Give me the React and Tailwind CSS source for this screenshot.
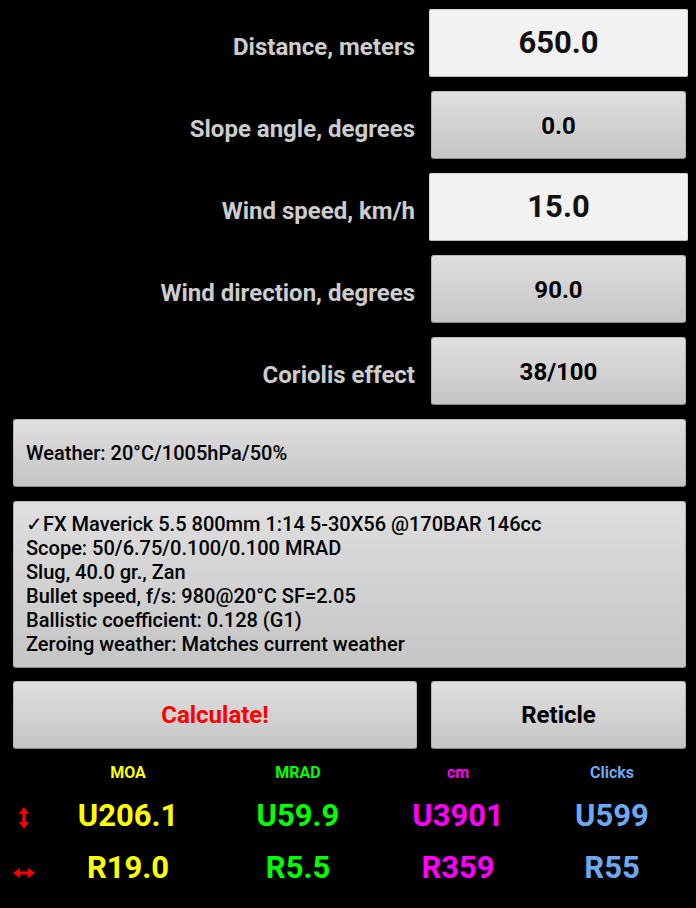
import React from "react";

const btn =
  "bg-linear-to-b from-[#dfdfdf] to-[#c5c5c5] rounded-[3px] border border-[#b4b4b4] border-b-[#8a8a8a]";

function Label({ children }) {
  return (
    <div className="flex-1 text-right pr-[14px] pt-[8px] text-[24px] font-bold text-[#cccccc] whitespace-nowrap">
      {children}
    </div>
  );
}

function InputRow({ label, value }) {
  return (
    <div className="flex items-center h-[82px]">
      <Label>{label}</Label>
      <div className="w-[259px] mr-[8px] h-[68px] bg-[#f2f2f2] border border-[#d4d4d4] border-b-[#b8b8b8] rounded-[2px] flex items-center justify-center text-[31px] font-bold text-[#111]">
        {value}
      </div>
    </div>
  );
}

function ButtonRow({ label, value }) {
  return (
    <div className="flex items-center h-[82px]">
      <Label>{label}</Label>
      <div className="w-[259px] mr-[8px] px-[2px]">
        <div className={`${btn} h-[68px] flex items-center justify-center pt-[1px] text-[24px] font-bold text-black`}>{value}</div>
      </div>
    </div>
  );
}

function VArrow() {
  return (
    <svg width="10" height="22" viewBox="0 0 10 22">
      <path d="M5 0 L10 7 L6.6 7 L6.6 15 L10 15 L5 22 L0 15 L3.4 15 L3.4 7 L0 7 Z" fill="#ff0000" />
    </svg>
  );
}

function HArrow() {
  return (
    <svg width="22" height="10" viewBox="0 0 22 10">
      <path d="M0 5 L7 0 L7 3.4 L15 3.4 L15 0 L22 5 L15 10 L15 6.6 L7 6.6 L7 10 Z" fill="#ff0000" />
    </svg>
  );
}

export default function App() {
  const profile = [
    "✓FX Maverick 5.5 800mm 1:14 5-30X56 @170BAR 146cc",
    "Scope: 50/6.75/0.100/0.100 MRAD",
    "Slug, 40.0 gr., Zan",
    "Bullet speed, f/s: 980@20°C SF=2.05",
    "Ballistic coefficient: 0.128 (G1)",
    "Zeroing weather: Matches current weather",
  ];
  const cols = "grid grid-cols-[48px_160px_180px_140px_168px] items-center";
  return (
    <div className="w-[696px] h-[908px] bg-black font-['Roboto',sans-serif] pt-[2px] overflow-hidden">
      <InputRow label="Distance, meters" value="650.0" />
      <ButtonRow label="Slope angle, degrees" value="0.0" />
      <InputRow label="Wind speed, km/h" value="15.0" />
      <ButtonRow label="Wind direction, degrees" value="90.0" />
      <ButtonRow label="Coriolis effect" value="38/100" />
      <div className="h-[82px] flex items-center pl-[13px] pr-[10px]">
        <div className={`${btn} w-full h-[68px] flex items-center pl-[12px] text-[20px] font-medium text-black`}>
          Weather: 20°C/1005hPa/50%
        </div>
      </div>
      <div className="h-[180px] flex items-center pl-[13px] pr-[10px]">
        <div className={`${btn} w-full h-[167px] flex flex-col justify-center pl-[12px] text-[20px] leading-[24px] font-medium text-black`}>
          {profile.map((l) => (
            <div key={l} className="whitespace-nowrap">{l}</div>
          ))}
        </div>
      </div>
      <div className="h-[82px] flex items-center pl-[13px] pr-[10px] gap-[14px]">
        <div className={`${btn} w-[404px] h-[68px] flex items-center justify-center text-[24px] font-bold text-[#ff0000]`}>
          Calculate!
        </div>
        <div className={`${btn} flex-1 h-[68px] flex items-center justify-center text-[24px] font-bold text-black`}>
          Reticle
        </div>
      </div>
      <div className={`${cols} h-[33px] pt-[1px] text-[16px] font-bold text-center`}>
        <div />
        <div className="text-[#ffff00]">MOA</div>
        <div className="text-[#00ff00]">MRAD</div>
        <div className="text-[#ff00ff]">cm</div>
        <div className="text-[#6fa8f2]">Clicks</div>
      </div>
      <div className={`${cols} h-[53px] pt-[2px] text-[31px] font-bold text-center`}>
        <div className="flex justify-center pt-[2px]"><VArrow /></div>
        <div className="text-[#ffff00]">U206.1</div>
        <div className="text-[#00ff00]">U59.9</div>
        <div className="text-[#ff00ff]">U3901</div>
        <div className="text-[#6fa8f2]">U599</div>
      </div>
      <div className={`${cols} h-[52px] text-[31px] font-bold text-center`}>
        <div className="flex justify-center pt-[10px]"><HArrow /></div>
        <div className="text-[#ffff00]">R19.0</div>
        <div className="text-[#00ff00]">R5.5</div>
        <div className="text-[#ff00ff]">R359</div>
        <div className="text-[#6fa8f2]">R55</div>
      </div>
    </div>
  );
}
